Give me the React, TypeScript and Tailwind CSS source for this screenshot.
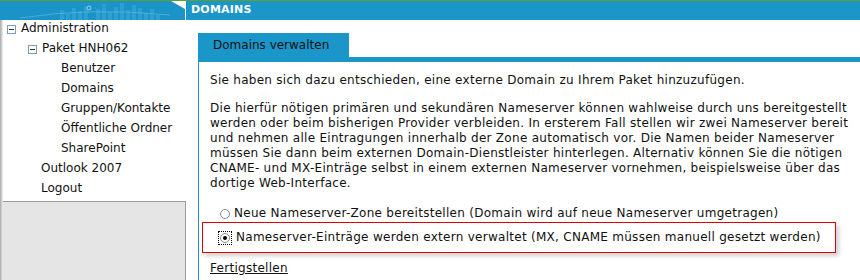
import React from 'react';

const FONT = { fontFamily: '"DejaVu Sans", Verdana, sans-serif' };

const bars = [
  [60, 10], [66, 6], [72, 12], [78, 9], [84, 14], [96, 11], [102, 16], [108, 8], [114, 13],
  [120, 17], [126, 10], [132, 15], [138, 12], [144, 7], [150, 11], [156, 5],
];

const HeaderArt: React.FC = () => (
  <svg width="185" height="19" viewBox="0 0 185 19" className="block">
    <rect width="185" height="19" fill="#1a93c8" />
    {bars.map(([x, h]) => (
      <rect key={x} x={x} y={19 - h} width="4" height={h} fill="#3aa6d6" opacity="0.6" />
    ))}
    <path d="M20 17 Q 90 6 170 14" stroke="#5cb6e0" strokeWidth="1" fill="none" opacity="0.7" />
    <circle cx="89" cy="7" r="2" fill="none" stroke="#8fd0ee" strokeWidth="1" />
    <polygon points="171,0 185,0 185,8" fill="#ffffff" />
  </svg>
);

const Minus: React.FC = () => (
  <span className="inline-flex w-[9px] h-[9px] border border-[#7f9db9] bg-white items-center justify-center mr-[5px] mt-[3px]">
    <span className="w-[5px] h-px bg-[#333]" />
  </span>
);

const Row: React.FC<{ indent: number; minus?: boolean; children: React.ReactNode }> = ({ indent, minus, children }) => (
  <div className="h-[20px] flex items-center text-[12px] text-[#111]" style={{ paddingLeft: indent }}>
    {minus && <Minus />}
    <span>{children}</span>
  </div>
);

const Radio: React.FC<{ checked?: boolean }> = ({ checked }) => (
  <span className="inline-flex w-[10px] h-[10px] rounded-full border border-[#8c8c8c] bg-white items-center justify-center shrink-0">
    {checked && <span className="w-[4px] h-[4px] rounded-full bg-black" />}
  </span>
);

export default function App() {
  return (
    <div className="w-[860px] h-[280px] overflow-hidden bg-white flex flex-col" style={FONT}>
      {/* top bar */}
      <div className="h-px bg-[#5f9e2e]" />
      <div className="h-[19px] flex bg-[#1a96c9]">
        <HeaderArt />
        <div className="w-px bg-white" />
        <div className="flex-1 flex items-center pl-[5px] text-white font-bold text-[11px] tracking-[0.2px]">
          DOMAINS
        </div>
      </div>

      <div className="flex flex-1 min-h-0">
        {/* sidebar */}
        <div className="w-[186px] flex shrink-0">
          <div className="w-[3px] bg-gradient-to-r from-[#a9a9a9] to-[#f2f2f2]" />
          <div className="flex-1 flex flex-col">
            <div className="-mt-[2px]">
              <Row indent={4} minus>Administration</Row>
              <Row indent={25} minus>Paket HNH062</Row>
              <Row indent={58}>Benutzer</Row>
              <Row indent={58}>Domains</Row>
              <Row indent={58}>Gruppen/Kontakte</Row>
              <Row indent={58}>Öffentliche Ordner</Row>
              <Row indent={58}>SharePoint</Row>
              <Row indent={38}>Outlook 2007</Row>
              <Row indent={38}>Logout</Row>
            </div>
            <div className="mt-[3px] flex-1 bg-[#e5e5e5] border-t border-r border-[#9a9a9a]" />
          </div>
        </div>

        {/* main */}
        <div className="flex-1 pl-[12px] pt-[13px] flex flex-col">
          <div className="flex flex-col">
            <div className="w-[151px] h-[24px] bg-[#1a96c9] flex items-center pl-[15px] text-[12px] text-[#111]">
              Domains verwalten
            </div>
            <div className="h-[5px] bg-[#1a96c9]" />
          </div>
          <div className="flex-1 border-l border-[#1a96c9] pl-[11px] pt-[11px] text-[12px] leading-[15px] text-[#111] tracking-[0.28px] whitespace-nowrap">
            <p className="mb-[13px]">Sie haben sich dazu entschieden, eine externe Domain zu Ihrem Paket hinzuzufügen.</p>
            <p>
              Die hierfür nötigen primären und sekundären Nameserver können wahlweise durch uns bereitgestellt<br />
              werden oder beim bisherigen Provider verbleiden. In ersterem Fall stellen wir zwei Nameserver bereit<br />
              und nehmen alle Eintragungen innerhalb der Zone automatisch vor. Die Namen beider Nameserver<br />
              müssen Sie dann beim externen Domain-Dienstleister hinterlegen. Alternativ können Sie die nötigen<br />
              CNAME- und MX-Einträge selbst in einem externen Nameserver vornehmen, beispielsweise über das<br />
              dortige Web-Interface.
            </p>
            <div className="mt-[15px] flex items-center gap-[4px] pl-[10px] h-[15px]">
              <Radio />
              <span>Neue Nameserver-Zone bereitstellen (Domain wird auf neue Nameserver umgetragen)</span>
            </div>
            <div className="-ml-[8px] mt-[1px] w-[634px] h-[31px] border border-[#e00000] shadow-[3px_3px_4px_rgba(0,0,0,0.18)] flex items-center pl-[15px] gap-[4px]">
              <span className="inline-flex p-px border border-dotted border-black">
                <Radio checked />
              </span>
              <span>Nameserver-Einträge werden extern verwaltet (MX, CNAME müssen manuell gesetzt werden)</span>
            </div>
            <a className="inline-block mt-[8px] underline text-[#111]">Fertigstellen</a>
          </div>
        </div>
      </div>
    </div>
  );
}
